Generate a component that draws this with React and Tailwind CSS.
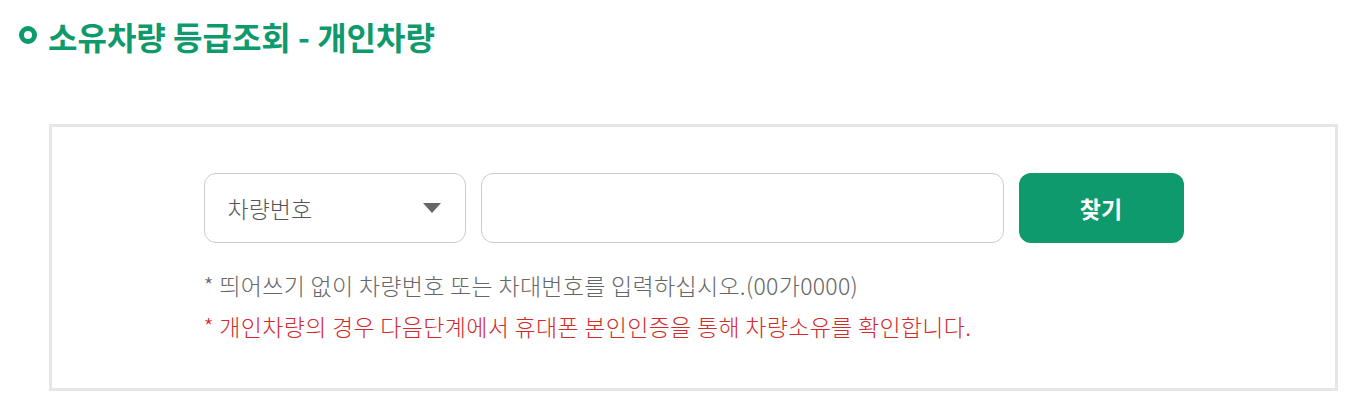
export default function App() {
  return (
    <div className="w-[1350px] h-[412px] bg-white pt-[16px] font-['Noto_Sans_CJK_KR','Noto_Sans',sans-serif]">
      {/* 제목 */}
      <h2 className="flex items-center pl-[19px] h-[40px] text-[32px] font-bold text-[#0e9a6c]">
        <span className="shrink-0 w-[18px] h-[18px] rounded-full border-[5px] border-[#0e9a6c] mr-[11px] -mt-[3px]" />
        소유차량 등급조회 - 개인차량
      </h2>

      <div className="ml-[49px] mt-[68px] w-[1289px] h-[267px] border-[3px] border-[#e6e6e6] pt-[46px]">
        <div className="w-[980px] mx-auto">
          <div className="flex gap-[15px]">
            <button className="w-[262px] h-[70px] rounded-[12px] border border-[#cccccc] flex items-center justify-between pl-[23px] pr-[24px] text-[23px] text-[#555555] font-light">
              차량번호
              <svg width="18" height="10" viewBox="0 0 18 10">
                <path d="M0 0 L18 0 L9 10 Z" fill="#666666" />
              </svg>
            </button>
            <input className="w-[523px] h-[70px] rounded-[12px] border border-[#cccccc] px-4 text-[20px] outline-none" />
            <button className="w-[165px] h-[70px] rounded-[12px] bg-[#0e9a6c] text-white text-[23px] font-bold">
              찾기
            </button>
          </div>
          <p className="mt-[27px] text-[23px] font-light text-[#666666] leading-[30px] tracking-[0.3px]">
            * 띄어쓰기 없이 차량번호 또는 차대번호를 입력하십시오.(00가0000)
          </p>
          <p className="mt-[11px] text-[23px] font-light text-[#d42a2a] leading-[30px] tracking-[0.3px]">
            * 개인차량의 경우 다음단계에서 휴대폰 본인인증을 통해 차량소유를 확인합니다.
          </p>
        </div>
      </div>
    </div>
  );
}
